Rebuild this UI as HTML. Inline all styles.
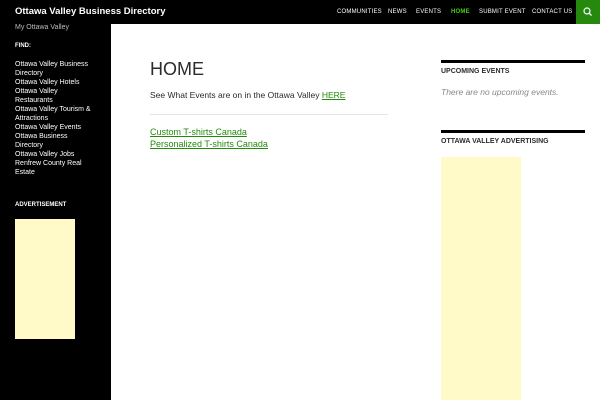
<!DOCTYPE html>
<html><head><style>
*{margin:0;padding:0;box-sizing:border-box}
body{width:600px;height:400px;overflow:hidden;background:#fff;font-family:"Liberation Sans",sans-serif;position:relative}
.hdr{position:absolute;left:0;top:0;width:600px;height:24px;background:#000}
.title{position:absolute;left:15px;top:6px;color:#fff;font-weight:bold;font-size:9.5px}
.nav{position:absolute;top:9px;font-size:6px;color:#fff;letter-spacing:.2px}
.srch{position:absolute;left:576px;top:0;width:24px;height:24px;background:#24890d}
.side{position:absolute;left:0;top:24px;width:111px;height:376px;background:#000;color:#fff}
.side .t{position:absolute;left:15px;font-size:6.5px}
.side .f{position:absolute;left:15px;top:36px;font-size:7px;line-height:9px;width:80px}
a{color:#24890d}
.w{position:absolute;left:441px;width:144px;border-top:3px solid #000;font-size:7px;font-weight:bold;color:#2b2b2b;padding-top:5px}
</style></head><body>
<div class="hdr"></div>
<div class="title">Ottawa Valley Business Directory</div>
<div class="nav" style="left:337px">COMMUNITIES</div>
<div class="nav" style="left:388px">NEWS</div>
<div class="nav" style="left:416px">EVENTS</div>
<div class="nav" style="left:451px;color:#41d016;font-weight:bold">HOME</div>
<div class="nav" style="left:479px">SUBMIT EVENT</div>
<div class="nav" style="left:532px">CONTACT US</div>
<div class="srch"><svg width="24" height="24"><circle cx="11" cy="11" r="3" stroke="#fff" stroke-width="1.2" fill="none"/><line x1="13" y1="13" x2="15.5" y2="15.5" stroke="#fff" stroke-width="1.3"/></svg></div>
<div class="side">
<div class="t" style="top:0;color:#bbb;font-size:7px">My Ottawa Valley</div>
<div class="t" style="top:19px;font-weight:bold;font-size:6px">FIND:</div>
<div class="f">Ottawa Valley Business Directory<br>Ottawa Valley Hotels<br>Ottawa Valley<br>Restaurants<br>Ottawa Valley Tourism &amp; Attractions<br>Ottawa Valley Events<br>Ottawa Business Directory<br>Ottawa Valley Jobs<br>Renfrew County Real Estate</div>
<div class="t" style="top:178px;font-weight:bold;font-size:6px">ADVERTISEMENT</div>
<div style="position:absolute;left:15px;top:195px;width:60px;height:120px;background:#fffac8"></div>
</div>
<div style="position:absolute;left:150px;top:59px;font-size:18px;color:#2b2b2b">HOME</div>
<div style="position:absolute;left:150px;top:90px;font-size:8.5px;color:#2b2b2b">See What Events are on in the Ottawa Valley <a href="#">HERE</a></div>
<div style="position:absolute;left:150px;top:114px;width:238px;border-top:1px solid #e5e5e5"></div>
<div style="position:absolute;left:150px;top:126px;font-size:9px;line-height:12px"><a href="#">Custom T-shirts Canada</a><br><a href="#">Personalized T-shirts Canada</a></div>
<div class="w" style="top:60px">UPCOMING EVENTS</div>
<div style="position:absolute;left:441px;top:87px;font-size:8.5px;font-style:italic;color:#888">There are no upcoming events.</div>
<div class="w" style="top:130px">OTTAWA VALLEY ADVERTISING</div>
<div style="position:absolute;left:441px;top:157px;width:80px;height:243px;background:#fffac8"></div>
</body></html>
